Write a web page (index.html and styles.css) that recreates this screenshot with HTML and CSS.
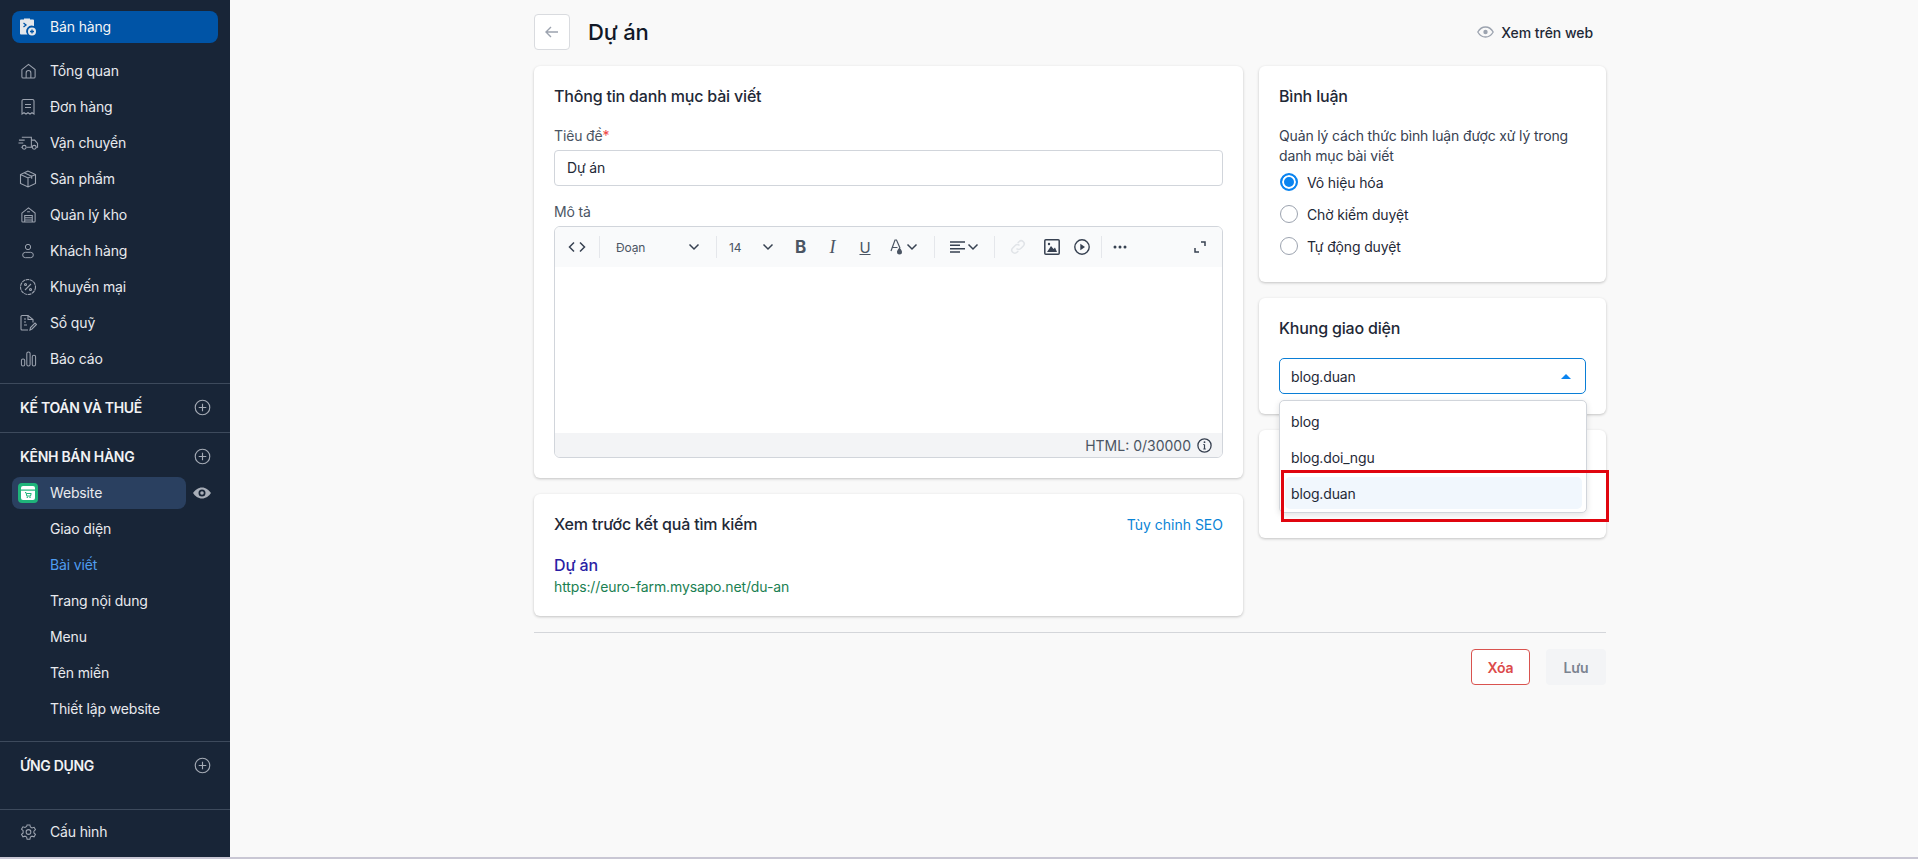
FILE: index.html
```html
<!DOCTYPE html>
<html lang="vi">
<head>
<meta charset="utf-8">
<title>Dự án</title>
<link rel="stylesheet" href="styles.css">
</head>
<body>
<div class="app">
  <aside class="sidebar">
    <div class="top">
      <a class="nav-item active">
        <span class="ico"><svg width="18" height="20" viewBox="0 0 18 20"><path fill="#e5e7eb" d="M2 2.500h3V1.500h6v1h3a1 1 0 0 1 1 1V9a5.500 5.500 0 0 0-6.500 8.500H2a1 1 0 0 1-1-1v-13a1 1 0 0 1 1-1z"/><circle cx="13" cy="14.500" r="4" fill="#e5e7eb"/><path d="M13 12.500v4M11 14.500h4" stroke="#0054a6" stroke-width="1.300"/><path d="M4.500 6l2.500 2-2.500 2" stroke="#0054a6" stroke-width="1.300" fill="none"/></svg></span>
        <span>Bán hàng</span>
      </a>
    </div>
    <nav class="main-nav">
      <a class="nav-item"><span class="ico"><svg width="17" height="18" viewBox="0 0 18 18" class="line"><path d="M2 7.500 9 2l7 5.500V15a1.500 1.500 0 0 1-1.500 1.500h-11A1.500 1.500 0 0 1 2 15z"/><path d="M6.500 16.500V11a2.500 2.500 0 0 1 5 0v5.500"/></svg></span><span>Tổng quan</span></a>
      <a class="nav-item"><span class="ico"><svg width="18" height="18" viewBox="0 0 18 18" class="line"><path d="M3 3a1.500 1.500 0 0 1 1.500-1.500h9A1.500 1.500 0 0 1 15 3v13l-2-1.300-2 1.300-2-1.300-2 1.300-2-1.300-2 1.300z"/><path d="M6 6.500h6M6 9.500h6"/></svg></span><span>Đơn hàng</span></a>
      <a class="nav-item"><span class="ico"><svg width="21" height="16" viewBox="0 0 22 16" class="line"><path d="M4 2h10v10.500H9M4 12.500H3M14 5h3.500l3 3.500v4h-1.500M14 12.500h1"/><circle cx="6.500" cy="12.500" r="2"/><circle cx="17" cy="12.500" r="2"/><path d="M1 5h6M0.500 8h5"/></svg></span><span>Vận chuyển</span></a>
      <a class="nav-item"><span class="ico"><svg width="18" height="18" viewBox="0 0 18 18" class="line"><path d="M9 1 1.500 4.500v9L9 17l7.500-3.500v-9zM1.500 4.500 9 8l7.500-3.500M9 8v9M5.200 2.800l7.500 3.500v2.500"/></svg></span><span>Sản phẩm</span></a>
      <a class="nav-item"><span class="ico"><svg width="17" height="18" viewBox="0 0 18 18" class="line"><path d="M2 7 9 1.500 16 7v8.500a1 1 0 0 1-1 1H3a1 1 0 0 1-1-1z"/><path d="M5 16.500V9.500h8v7M5 12h8M5 14.300h8M7.500 5.500h3"/></svg></span><span>Quản lý kho</span></a>
      <a class="nav-item"><span class="ico"><svg width="16" height="18" viewBox="0 0 18 18" class="line"><circle cx="9" cy="4.500" r="3"/><rect x="3" y="10.500" width="12" height="6" rx="3"/></svg></span><span>Khách hàng</span></a>
      <a class="nav-item"><span class="ico"><svg width="18" height="18" viewBox="0 0 18 18" class="line"><circle cx="9" cy="9" r="7.500" stroke-dasharray="3.500 .6"/><path d="M6 12l6-6"/><circle cx="6.500" cy="6.500" r="1"/><circle cx="11.500" cy="11.500" r="1"/></svg></span><span>Khuyến mại</span></a>
      <a class="nav-item"><span class="ico"><svg width="18" height="18" viewBox="0 0 18 18" class="line"><path d="M9 16H3a1 1 0 0 1-1-1V2.500a1 1 0 0 1 1-1h6l5 4v3"/><path d="M9 1.500v4h5"/><path d="M11 16l.5-2.500 4.500-4.500 1.500 1.500-4.500 4.500z"/><path d="M5 5h2M5 8h2M5 11h3"/></svg></span><span>Sổ quỹ</span></a>
      <a class="nav-item"><span class="ico"><svg width="17" height="18" viewBox="0 0 18 18" class="line"><rect x="1.500" y="9" width="3.500" height="7.500" rx="1.700"/><rect x="7.200" y="1.500" width="3.500" height="15" rx="1.700"/><rect x="13" y="5" width="3.500" height="11.500" rx="1.700"/></svg></span><span>Báo cáo</span></a>
    </nav>
    <section class="group one">
      <div class="group-head"><span>KẾ TOÁN VÀ THUẾ</span><svg class="plus" width="17" height="17" viewBox="0 0 18 18"><circle cx="9" cy="9" r="7.700"/><path d="M9 5v8M5 9h8"/></svg></div>
    </section>
    <section class="group channels">
      <div class="group-head"><span>KÊNH BÁN HÀNG</span><svg class="plus" width="17" height="17" viewBox="0 0 18 18"><circle cx="9" cy="9" r="7.700"/><path d="M9 5v8M5 9h8"/></svg></div>
      <div class="site-row">
        <a class="nav-item site">
          <span class="site-ico"><svg width="14" height="14" viewBox="0 0 14 14"><rect width="14" height="14" rx="2" fill="#fff"/><rect y="3.500" width="14" height="1.200" fill="#1fb47a"/><path d="M4 6.500h1l.8 3.500h3.700l.7-2.500H5.500" stroke="#1fb47a" fill="none"/><circle cx="6.300" cy="11.300" r=".8" fill="#1fb47a"/><circle cx="9" cy="11.300" r=".8" fill="#1fb47a"/></svg></span>
          <span>Website</span>
        </a>
        <svg class="eye" width="18" height="18" viewBox="0 0 18 18"><path fill="#a8aeb8" fill-rule="evenodd" d="M9 3.500c3.800 0 7 2.500 9 5.500-2 3-5.200 5.500-9 5.500S2 12 0 9c2-3 5.200-5.500 9-5.500zM9 5.500a3.500 3.500 0 1 0 0 7 3.500 3.500 0 0 0 0-7z"/><circle cx="9" cy="9" r="1.800" fill="#a8aeb8"/></svg>
      </div>
      <a class="sub">Giao diện</a>
      <a class="sub current">Bài viết</a>
      <a class="sub">Trang nội dung</a>
      <a class="sub">Menu</a>
      <a class="sub">Tên miền</a>
      <a class="sub">Thiết lập website</a>
    </section>
    <section class="group apps">
      <div class="group-head"><span>ỨNG DỤNG</span><svg class="plus" width="17" height="17" viewBox="0 0 18 18"><circle cx="9" cy="9" r="7.700"/><path d="M9 5v8M5 9h8"/></svg></div>
    </section>
    <section class="group settings">
      <a class="nav-item"><span class="ico"><svg width="17" height="18" viewBox="0 0 18 18" class="line"><path d="M7.500 1.500h3l.5 2.200 1.700 1 2.200-.7 1.500 2.600-1.700 1.500v1.900l1.700 1.500-1.500 2.600-2.200-.7-1.700 1-.5 2.200h-3l-.5-2.200-1.700-1-2.200.7-1.500-2.600 1.700-1.500V7.600L1.600 6.100l1.500-2.600 2.200.7 1.700-1z"/><circle cx="9" cy="9" r="2.500"/></svg></span><span>Cấu hình</span></a>
    </section>
  </aside>

  <main class="main">
    <div class="content">
      <header class="page-head">
        <button class="back"><svg width="14" height="12" viewBox="0 0 14 12"><path d="M13 6H1.500M6 1 1 6l5 5" fill="none" stroke="#9ca3af" stroke-width="1.400"/></svg></button>
        <h1>Dự án</h1>
        <a class="view-web"><svg width="17" height="12" viewBox="0 0 17 12"><path d="M.8 6C2.500 3 5.200 1 8.500 1s6 2 7.700 5c-1.700 3-4.400 5-7.700 5S2.500 9 .8 6z" fill="none" stroke="#9ca3af" stroke-width="1.300"/><circle cx="8.500" cy="6" r="2.200" fill="#9ca3af"/></svg><span>Xem trên web</span></a>
      </header>
      <div class="columns">
        <div class="col-left">
          <section class="card info">
            <h2>Thông tin danh mục bài viết</h2>
            <label class="label title-label">Tiêu đề<span class="req">*</span></label>
            <div class="input">Dự án</div>
            <label class="label desc-label">Mô tả</label>
            <div class="editor">
              <div class="toolbar">
                <span class="tool w-code"><svg width="18" height="12" viewBox="0 0 18 12" class="tb"><path d="M6 1.500 1.500 6 6 10.500M12 1.500 16.500 6 12 10.500"/></svg></span>
                <i class="sep"></i>
                <span class="tool w-para"><span>Đoạn</span><svg width="12" height="8" viewBox="0 0 12 8" class="tb"><path d="M1.500 1.500 6 6l4.500-4.500"/></svg></span>
                <i class="sep"></i>
                <span class="tool w-size"><span>14</span><svg width="12" height="8" viewBox="0 0 12 8" class="tb"><path d="M1.500 1.500 6 6l4.500-4.500"/></svg></span>
                <span class="tool w-b"><b>B</b></span>
                <span class="tool w-i"><em>I</em></span>
                <span class="tool w-u"><u>U</u></span>
                <span class="tool w-a"><svg width="14" height="18" viewBox="0 0 14 18"><path d="M1 13 5 2h1.500l3.500 8M2.500 9.500h5" fill="none" stroke="#4b5563" stroke-width="1.200"/><path d="M9.500 9.500c1.500 2 2.500 3 2.500 4.500a2.500 2.500 0 0 1-5 0c0-1.500 1-2.500 2.500-4.500z" fill="#4b5563"/></svg><svg width="12" height="8" viewBox="0 0 12 8" class="tb"><path d="M1.500 1.500 6 6l4.500-4.500"/></svg></span>
                <i class="sep"></i>
                <span class="tool w-align"><svg width="16" height="12" viewBox="0 0 16 12" class="tb"><path d="M0 1h15M0 4.300h10M0 7.700h15M0 11h10"/></svg><svg width="12" height="8" viewBox="0 0 12 8" class="tb"><path d="M1.500 1.500 6 6l4.500-4.500"/></svg></span>
                <i class="sep"></i>
                <span class="tool w-link"><svg width="16" height="16" viewBox="0 0 16 16" fill="none" stroke="#e1e4e8" stroke-width="1.500"><path d="M6.500 9.500a3 3 0 0 0 4.300 0l2.500-2.500a3 3 0 0 0-4.300-4.300L7.700 4"/><path d="M9.500 6.500a3 3 0 0 0-4.300 0L2.700 9a3 3 0 0 0 4.300 4.300L8.300 12"/></svg></span>
                <span class="tool w-img"><svg width="16" height="16" viewBox="0 0 16 16"><rect x=".8" y=".8" width="14.400" height="14.400" rx="1" fill="none" stroke="#374151" stroke-width="1.500"/><circle cx="5" cy="5" r="1.200" fill="#374151"/><path d="M3 13l4-6 2.500 3 1.500-1.500 2 4.500z" fill="#374151"/></svg></span>
                <span class="tool w-play"><svg width="16" height="16" viewBox="0 0 16 16"><circle cx="8" cy="8" r="7.200" fill="none" stroke="#374151" stroke-width="1.400"/><path d="M6.300 4.800 11 8l-4.700 3.200z" fill="#374151"/></svg></span>
                <i class="sep"></i>
                <span class="tool w-more"><svg width="14" height="4" viewBox="0 0 14 4" fill="#374151"><circle cx="2" cy="2" r="1.500"/><circle cx="7" cy="2" r="1.500"/><circle cx="12" cy="2" r="1.500"/></svg></span>
                <span class="tool w-full"><svg width="12" height="12" viewBox="0 0 12 12" fill="none" stroke="#374151" stroke-width="1.500"><path d="M7 1h4v4M5 11H1V7"/></svg></span>
              </div>
              <div class="editor-body"></div>
              <div class="editor-foot"><span>HTML: 0/30000</span><svg width="15" height="15" viewBox="0 0 15 15"><circle cx="7.500" cy="7.500" r="6.600" fill="none" stroke="#374151" stroke-width="1.300"/><path d="M7.500 6.500v4.500M6.300 6.500h1.200M6.300 11h2.500" stroke="#374151" stroke-width="1.200" fill="none"/><circle cx="7.500" cy="4.200" r=".9" fill="#374151"/></svg></div>
            </div>
          </section>
          <section class="card seo">
            <div class="seo-head"><h2>Xem trước kết quả tìm kiếm</h2><a class="seo-link">Tùy chỉnh SEO</a></div>
            <div class="seo-title">Dự án</div>
            <div class="seo-url">https://euro-farm.mysapo.net/du-an</div>
          </section>
        </div>
        <div class="col-right">
          <section class="card comments">
            <h2>Bình luận</h2>
            <p class="note">Quản lý cách thức bình luận được xử lý trong danh mục bài viết</p>
            <div class="radio-row"><span class="radio on"></span><span>Vô hiệu hóa</span></div>
            <div class="radio-row"><span class="radio"></span><span>Chờ kiểm duyệt</span></div>
            <div class="radio-row"><span class="radio"></span><span>Tự động duyệt</span></div>
          </section>
          <section class="card frame">
            <h2>Khung giao diện</h2>
            <div class="select"><span>blog.duan</span><i class="caret"></i></div>
            <div class="dropdown">
              <div class="opt">blog</div>
              <div class="opt">blog.doi_ngu</div>
              <div class="opt sel">blog.duan</div>
            </div>
            <div class="annot"></div>
          </section>
          <section class="card hidden-card"></section>
        </div>
      </div>
      <div class="actions">
        <button class="btn danger">Xóa</button>
        <button class="btn off">Lưu</button>
      </div>
    </div>
  </main>
</div>
</body>
</html>
```
FILE: styles.css
```css
* { box-sizing: border-box; }
html, body { margin: 0; height: 100%; }
body { font-family: Inter, "Noto Sans", sans-serif; font-size: 14px; letter-spacing: -0.15px; color: #1f2937; background: #f9f9f9; overflow: hidden; }
.app { display: flex; height: 857px; }
body::after { content: ""; display: block; height: 2px; background: #c9c7d4; }
a { text-decoration: none; color: inherit; }
h1, h2, p { margin: 0; }

.sidebar { width: 230px; flex: none; background: #182537; color: #e8eaee; display: flex; flex-direction: column; }
.top { padding: 11px 12px 0; }
.nav-item { display: flex; align-items: center; height: 36px; padding-left: 8px; border-radius: 8px; margin: 0 12px; line-height: 20px; }
.top .nav-item { margin: 0; height: 32px; background: #0054a6; color: #f3f4f6; }
.ico { width: 30px; flex: none; display: flex; justify-content: center; padding-right: 14px; }
.ico svg { flex: none; }
.main-nav { padding-top: 10px; height: 340px; }
.line { fill: none; stroke: #9ca3af; stroke-width: 1.100; }
.group { border-top: 1px solid #3d4a5c; }
.group-head { display: flex; align-items: center; justify-content: space-between; height: 24px; padding: 0 19px 0 20px; font-weight: 600; color: #f1f2f4; letter-spacing: -0.3px; }
.plus { fill: none; stroke: #a5abb5; stroke-width: 1.200; }
.one { height: 49px; padding-top: 11px; }
.channels { height: 309px; padding-top: 11px; }
.apps { height: 68px; padding-top: 11px; }
.settings { flex: 1; padding-top: 4px; }
.site-row { display: flex; align-items: center; margin-top: 9px; height: 32px; }
.nav-item.site { width: 174px; height: 32px; background: #2a4060; padding-left: 6px; margin: 0 7px 0 12px; }
.site-ico { width: 20px; height: 20px; background: #1fb47a; border-radius: 4px; display: flex; align-items: center; justify-content: center; margin-right: 12px; }
.eye { flex: none; }
.sub { display: flex; align-items: center; height: 36px; padding-left: 50px; }
.site-row + .sub { margin-top: 1px; }
.sub.current { color: #4f9cf0; }

.main { flex: 1; padding-right: 8px; min-width: 0; }
.content { width: 1072px; margin: 0 auto; }
.page-head { display: flex; align-items: center; height: 66px; padding-bottom: 2px; }
.back { width: 36px; height: 36px; border: 1px solid #d9dbdf; background: #fff; border-radius: 4px; display: flex; align-items: center; justify-content: center; padding: 0; }
h1 { font-size: 22px; font-weight: 500; color: #111827; margin-left: 18px; line-height: 32px; }
.view-web { margin-left: auto; display: flex; align-items: center; gap: 7px; font-weight: 500; font-size: 14px; padding-right: 13px; color: #1f2937; letter-spacing: -0.05px; }
.columns { display: flex; gap: 16px; align-items: flex-start; }
.col-left { width: 709px; display: flex; flex-direction: column; gap: 16px; }
.col-right { width: 347px; display: flex; flex-direction: column; gap: 16px; }
.card { background: #fff; border-radius: 6px; box-shadow: 0 1px 3px rgba(0,0,0,.22); padding: 18px 20px 20px; }
h2 { font-size: 16px; font-weight: 500; line-height: 24px; color: #1f2937; letter-spacing: -0.18px; }
.info { height: 412px; }
.label { display: block; color: #4b5563; line-height: 20px; }
.title-label { margin-top: 18px; margin-bottom: 4px; }
.req { color: #ef4444; }
.input { height: 36px; border: 1px solid #d1d5db; border-radius: 4px; padding: 0 12px; line-height: 34px; color: #1f2937; }
.desc-label { margin-top: 16px; margin-bottom: 4px; }
.editor { height: 232px; border: 1px solid #d1d5db; border-radius: 6px; display: flex; flex-direction: column; overflow: hidden; }
.toolbar { height: 40px; flex: none; background: #f9fafb; display: flex; align-items: center; }
.tb { fill: none; stroke: #374151; stroke-width: 1.500; flex: none; }
.sep { width: 1px; height: 22px; background: #e5e7eb; flex: none; }
.tool { display: flex; align-items: center; height: 100%; justify-content: center; flex: none; font-size: 12px; color: #4b5563; }
.w-code { width: 44px; }
.w-para { width: 116px; justify-content: space-between; padding: 0 16px; }
.w-size { width: 67px; justify-content: space-between; padding: 0 10px 0 12px; }
.w-b { width: 33px; }
.w-b b { font-size: 17px; }
.w-i { width: 31px; }
.w-i em { font-family: "Liberation Serif", serif; font-size: 18px; }
.w-u { width: 34px; }
.w-u u { font-size: 15px; }
.w-a { width: 52px; gap: 2px; padding-right: 9px; }
.w-align { width: 59px; gap: 1px; }
.w-link { width: 45px; }
.w-img { width: 23px; }
.w-play { width: 38px; }
.w-more { width: 36px; }
.w-full { margin-left: auto; width: 44px; }
.editor-body { flex: 1; background: #fff; }
.editor-foot { height: 24px; flex: none; background: #f3f4f6; display: flex; align-items: center; justify-content: flex-end; gap: 6px; padding-right: 10px; color: #4b5563; letter-spacing: 0; }
.seo { height: 122px; }
.seo-head { display: flex; align-items: center; justify-content: space-between; }
.seo-link { color: #0a84d6; letter-spacing: 0; }
.seo-title { margin-top: 18px; font-size: 16px; line-height: 22px; color: #2a1ea5; font-weight: 500; }
.seo-url { font-size: 14px; line-height: 20px; color: #1a8052; margin-top: 1px; letter-spacing: -0.12px; }
.comments { height: 216px; }
.note { margin-top: 18px; line-height: 20px; color: #374151; }
.radio-row { display: flex; align-items: center; gap: 9px; height: 32px; color: #1f2937; padding-left: 1px; }
.radio { width: 18px; height: 18px; border: 1.500px solid #9ca3af; border-radius: 50%; flex: none; background: #fff; }
.radio.on { border: 2px solid #0a84f0; box-shadow: inset 0 0 0 2px #fff; background: #0a84f0; }
.frame { height: 116px; position: relative; }
.select { margin-top: 18px; height: 36px; border: 1px solid #0a7ed6; border-radius: 5px; display: flex; align-items: center; justify-content: space-between; padding: 0 14px 0 11px; }
.caret { width: 0; height: 0; border: 5px solid transparent; border-top: 0; border-bottom: 5px solid #0a84f0; }
.dropdown { position: absolute; z-index: 5; left: 20px; top: 102px; width: 308px; height: 113px; background: #fff; border: 1px solid #d1d5db; border-radius: 5px; box-shadow: 0 2px 6px rgba(0,0,0,.12); padding: 2px 4px 0 5px; }
.opt { height: 36px; display: flex; align-items: center; padding-left: 6px; }
.opt.sel { height: 32px; background: #f1f7fd; border-radius: 5px; margin-top: 2px; }
.annot { position: absolute; z-index: 6; left: 22px; top: 172px; width: 328px; height: 52px; border: 3px solid #e0050f; }
.hidden-card { height: 108px; }
.actions { margin-top: 16px; border-top: 1px solid #d4d6da; padding-top: 16px; display: flex; justify-content: flex-end; gap: 16px; }
.btn { height: 36px; border-radius: 4px; font-family: inherit; font-size: 14px; font-weight: 600; padding: 0; letter-spacing: inherit; }
.btn.danger { width: 59px; background: #fff; border: 1px solid #d9534f; color: #dc4b4b; }
.btn.off { width: 60px; background: #f3f4f6; border: 0; color: #7b8390; }
```
